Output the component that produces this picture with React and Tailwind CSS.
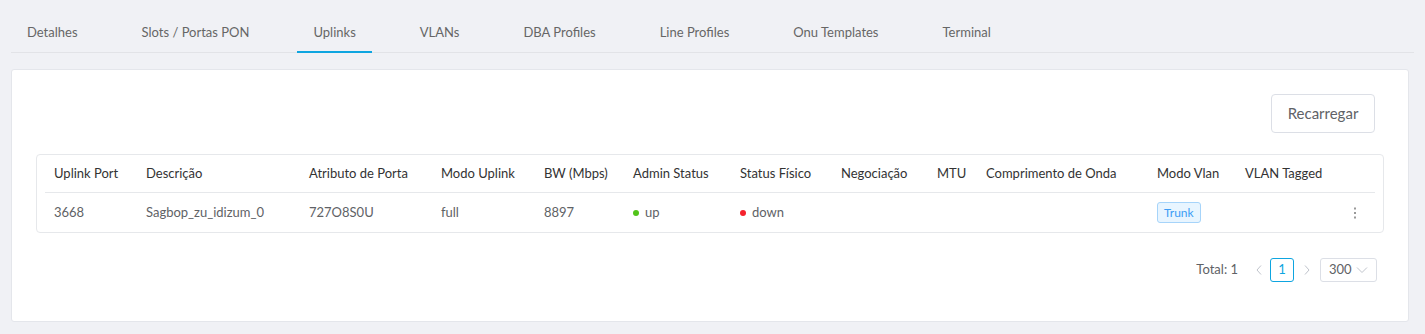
import React from 'react';

const tabs = ['Detalhes', 'Slots / Portas PON', 'Uplinks', 'VLANs', 'DBA Profiles', 'Line Profiles', 'Onu Templates', 'Terminal'];

const columns = [
  'Uplink Port',
  'Descrição',
  'Atributo de Porta',
  'Modo Uplink',
  'BW (Mbps)',
  'Admin Status',
  'Status Físico',
  'Negociação',
  'MTU',
  'Comprimento de Onda',
  'Modo Vlan',
  'VLAN Tagged',
  '',
];

const gridCols = 'grid grid-cols-[92px_163px_132px_103px_89px_107px_101px_96px_49px_171px_88px_1fr_40px]';

const StatusDot = ({ color, label }) => (
  <span className="flex items-center gap-[6px]">
    <span className={`w-[6px] h-[6px] rounded-full ${color}`} />
    {label}
  </span>
);

const App = () => {
  return (
    <div className="min-h-screen bg-[#f0f1f5] px-[11px] pt-[13px] text-[13px] text-[#606266]" style={{ fontFamily: 'Lato, "Noto Sans", sans-serif' }}>
      <div className="flex gap-8 border-b border-[#e2e3e7] h-[40px] text-[13px] text-[#666]">
        {tabs.map((tab) => (
          <div key={tab} className="px-4 flex items-center relative">
            {tab}
            {tab === 'Uplinks' && <span className="absolute left-0 right-0 -bottom-[1px] h-[2px] bg-[#0ea5e0]" />}
          </div>
        ))}
      </div>

      <div className="mt-[16px] mr-[5px] bg-white border border-[#e4e6eb] rounded-[3px] px-6 pt-6 pb-[39px]">
        <div className="flex justify-end mr-[9px]">
          <button className="h-[39px] w-[104px] border border-[#dcdfe6] rounded-[4px] text-[15px] text-[#606266] bg-white">
            Recarregar
          </button>
        </div>

        <div className="mt-[21px] border border-[#e6e8eb] rounded-[4px] px-2">
          <div className={`${gridCols} h-[38px] items-center border-b border-[#e6e8eb] text-[#333]`}>
            {columns.map((c, i) => (
              <div key={i} className="pl-[9px] whitespace-nowrap">{c}</div>
            ))}
          </div>
          <div className={`${gridCols} h-[39px] items-center`}>
            <div className="pl-[9px]">3668</div>
            <div className="pl-[9px]">Sagbop_zu_idizum_0</div>
            <div className="pl-[9px]">727O8S0U</div>
            <div className="pl-[9px]">full</div>
            <div className="pl-[9px]">8897</div>
            <div className="pl-[9px]"><StatusDot color="bg-[#52c41a]" label="up" /></div>
            <div className="pl-[9px]"><StatusDot color="bg-[#f5222d]" label="down" /></div>
            <div className="pl-[9px]" />
            <div className="pl-[9px]" />
            <div className="pl-[9px]" />
            <div className="pl-[9px]">
              <span className="inline-flex items-center h-[21px] px-[6px] rounded-[3px] border border-[#a6d4fa] bg-[#e8f5ff] text-[12px] text-[#3b9cf5]">
                Trunk
              </span>
            </div>
            <div className="pl-[9px]" />
            <div className="flex justify-center">
              <svg width="4" height="14" viewBox="0 0 4 14">
                <rect x="1" y="1.5" width="2" height="2" fill="#999" />
                <rect x="1" y="6" width="2" height="2" fill="#999" />
                <rect x="1" y="10.5" width="2" height="2" fill="#999" />
              </svg>
            </div>
          </div>
        </div>

        <div className="mt-[25px] flex justify-end items-center mr-[7px] text-[13px]">
          <span className="mr-[10px]">Total: 1</span>
          <svg width="10" height="12" viewBox="0 0 10 12" className="mx-[6px]">
            <path d="M7 1.5 L3 6 L7 10.5" fill="none" stroke="#c0c4cc" strokeWidth="1" />
          </svg>
          <span className="flex items-center justify-center w-[24px] h-[24px] border border-[#0ea5e0] rounded-[3px] text-[#0ea5e0]">1</span>
          <svg width="10" height="12" viewBox="0 0 10 12" className="mx-[8px]">
            <path d="M3 1.5 L7 6 L3 10.5" fill="none" stroke="#c0c4cc" strokeWidth="1" />
          </svg>
          <span className="flex items-center justify-between w-[57px] h-[24px] border border-[#dcdfe6] rounded-[3px] px-2">
            300
            <svg width="12" height="8" viewBox="0 0 12 8">
              <path d="M1 1.5 L6 6.5 L11 1.5" fill="none" stroke="#c0c4cc" strokeWidth="1" />
            </svg>
          </span>
        </div>
      </div>
    </div>
  );
};

export default App;
